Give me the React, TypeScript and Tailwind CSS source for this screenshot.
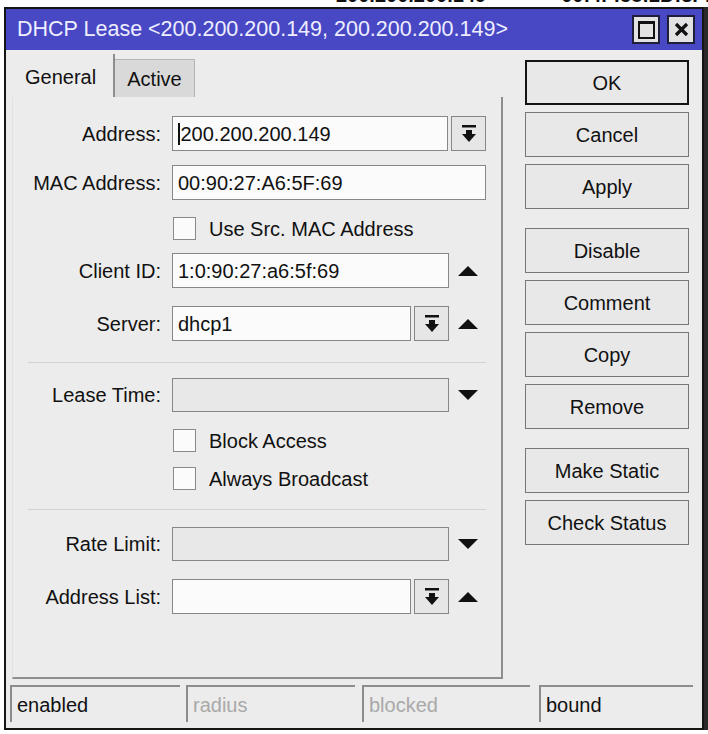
import React from 'react'

// MikroTik-style "DHCP Lease" dialog, drawn at the scale of the screenshot.

function DropIcon() {
  return (
    <svg width="16" height="19" viewBox="0 0 16 19" className="fill-[#111]">
      <rect x="1" y="1" width="14" height="2.5" />
      <path d="M5 6h6v4h4L8 18 1 10h4z" />
    </svg>
  )
}

function Tri({ dir }: { dir: 'up' | 'down' }) {
  return (
    <svg width="20" height="10" viewBox="0 0 20 10" className="fill-[#111]">
      {dir === 'up' ? <path d="M10 0 20 10H0z" /> : <path d="M0 0h20L10 10z" />}
    </svg>
  )
}

function Input({
  w,
  value,
  disabled,
  caret,
}: {
  w: string
  value?: string
  disabled?: boolean
  caret?: boolean
}) {
  return (
    <div
      className={`${w} flex h-full items-center border-[1.5px] border-[#878787] pl-[5px] text-[20px] text-[#111] ${
        disabled ? 'bg-[#e8e8e8]' : 'bg-[#fbfbfb]'
      }`}
    >
      {caret && <span className="mr-[1px] h-[22px] w-[1.5px] bg-[#111]" />}
      {value}
    </div>
  )
}

function DropBtn() {
  return (
    <div className="ml-[3px] flex h-full w-[35px] items-center justify-center border-[1.5px] border-[#878787] bg-[#e6e6e6]">
      <DropIcon />
    </div>
  )
}

function Row({
  label,
  mt,
  h = 'h-[35px]',
  children,
}: {
  label: string
  mt: string
  h?: string
  children: React.ReactNode
}) {
  return (
    <div className={`flex items-center ${h} ${mt}`}>
      <div className="w-[148px] text-right text-[20px] text-[#111]">{label}</div>
      <div className="ml-[11px] flex h-full items-center">{children}</div>
    </div>
  )
}

function TriSlot({ dir }: { dir: 'up' | 'down' }) {
  return (
    <div className="flex w-[38px] items-center justify-center">
      <Tri dir={dir} />
    </div>
  )
}

function Check({ label, mt }: { label: string; mt: string }) {
  return (
    <div className={`ml-[160px] flex h-[23px] items-center ${mt}`}>
      <span className="size-[23px] border-[1.5px] border-[#8a8a8a] bg-[#fbfbfb]" />
      <span className="ml-[13px] text-[20px] text-[#111]">{label}</span>
    </div>
  )
}

function Sep({ mt }: { mt: string }) {
  return <div className={`ml-[15px] h-px w-[458px] bg-[#d2d2d2] ${mt}`} />
}

function Btn({ label, mt, primary }: { label: string; mt: string; primary?: boolean }) {
  return (
    <div
      className={`flex h-[45px] w-[164px] items-center justify-center bg-[#e8e8e8] text-[20px] text-[#111] ${mt} ${
        primary ? 'border-2 border-[#141414]' : 'border-[1.5px] border-[#767676]'
      }`}
    >
      {label}
    </div>
  )
}

function Cell({ w, text, dim }: { w: string; text: string; dim?: boolean }) {
  return (
    <div
      className={`${w} flex h-full items-center border-l-2 border-t-2 border-[#8c8c8c] pl-[5px] text-[20px] ${
        dim ? 'text-[#a9a9a9]' : 'text-[#111]'
      }`}
    >
      {text}
    </div>
  )
}

export default function App() {
  return (
    <div className="h-[734px] w-[708px] overflow-hidden bg-white font-['Liberation_Sans',Arial,sans-serif]">
      {/* edge of the list window behind */}
      <div className="flex h-[7px] overflow-hidden text-[20px] font-bold leading-[22px] text-[#111]">
        <span className="ml-[336px] mt-[-16px]">200.200.200.149</span>
        <span className="ml-[75px] mt-[-16px]">00:4F:58:2D:3F:24</span>
      </div>

      <div className="flex">
        <div className="w-[4px]" />
        <div className="flex h-[723px] w-[700px] flex-col border-2 border-[#151515]">
          {/* title bar */}
          <div className="flex h-[41px] items-center bg-[#4848c4] pl-[11px] pr-[7px]">
            <span className="text-[21.5px] text-[#eeeeff]">
              DHCP Lease &lt;200.200.200.149, 200.200.200.149&gt;
            </span>
            <div className="ml-auto flex gap-[7px]">
              <div className="flex h-[29px] w-[28px] items-center justify-center border-2 border-[#1e1e3a] bg-[#e2e2e2]">
                <span className="h-[18px] w-[17px] border-2 border-t-[3px] border-[#111]" />
              </div>
              <div className="flex h-[29px] w-[28px] items-center justify-center border-2 border-[#1e1e3a] bg-[#e2e2e2]">
                <svg width="15" height="15" viewBox="0 0 15 15" className="stroke-[#111]">
                  <path d="M2 2 13 13M13 2 2 13" strokeWidth="3.2" />
                </svg>
              </div>
            </div>
          </div>

          {/* body */}
          <div className="flex flex-1 flex-col bg-[#ececec]">
            <div className="flex h-[629px]">
              <div className="flex flex-col pl-[6px] pt-[4px]">
                {/* tabs */}
                <div className="flex h-[43px] items-end">
                  <div className="flex h-[43px] w-[103px] items-center border-r-2 border-[#8e8e8e] pl-[13px] pt-[2px] text-[20px] text-[#111]">
                    General
                  </div>
                  <div className="flex h-[38px] w-[80px] items-center justify-center border-r-[1.5px] border-t-[1.5px] border-[#b4b4b4] bg-[#d9d9d9] text-[20px] text-[#111]">
                    Active
                  </div>
                  <div className="h-px flex-1" />
                </div>

                {/* tab panel */}
                <div className="flex h-[582px] w-[491px] flex-col border-b-2 border-r-2 border-[#8e8e8e] border-l border-l-[#e2e2e2]">
                  <Row label="Address:" mt="mt-[19px]">
                    <Input w="w-[276px]" value="200.200.200.149" caret />
                    <DropBtn />
                  </Row>
                  <Row label="MAC Address:" mt="mt-[14px]">
                    <Input w="w-[314px]" value="00:90:27:A6:5F:69" />
                  </Row>
                  <Check label="Use Src. MAC Address" mt="mt-[17px]" />
                  <Row label="Client ID:" mt="mt-[13px]">
                    <Input w="w-[277px]" value="1:0:90:27:a6:5f:69" />
                    <TriSlot dir="up" />
                  </Row>
                  <Row label="Server:" mt="mt-[18px]">
                    <Input w="w-[239px]" value="dhcp1" />
                    <DropBtn />
                    <TriSlot dir="up" />
                  </Row>
                  <Sep mt="mt-[21px]" />
                  <Row label="Lease Time:" mt="mt-[15px]" h="h-[34px]">
                    <Input w="w-[277px]" disabled />
                    <TriSlot dir="down" />
                  </Row>
                  <Check label="Block Access" mt="mt-[17px]" />
                  <Check label="Always Broadcast" mt="mt-[15px]" />
                  <Sep mt="mt-[19px]" />
                  <Row label="Rate Limit:" mt="mt-[17px]" h="h-[34px]">
                    <Input w="w-[277px]" disabled />
                    <TriSlot dir="down" />
                  </Row>
                  <Row label="Address List:" mt="mt-[18px]">
                    <Input w="w-[239px]" />
                    <DropBtn />
                    <TriSlot dir="up" />
                  </Row>
                </div>
              </div>

              {/* buttons */}
              <div className="ml-[22px] flex flex-col">
                <Btn label="OK" mt="mt-[10px]" primary />
                <Btn label="Cancel" mt="mt-[7px]" />
                <Btn label="Apply" mt="mt-[7px]" />
                <Btn label="Disable" mt="mt-[19px]" />
                <Btn label="Comment" mt="mt-[7px]" />
                <Btn label="Copy" mt="mt-[7px]" />
                <Btn label="Remove" mt="mt-[7px]" />
                <Btn label="Make Static" mt="mt-[19px]" />
                <Btn label="Check Status" mt="mt-[7px]" />
              </div>
            </div>

            {/* status bar */}
            <div className="ml-[4px] mt-[6px] flex h-[37px]">
              <Cell w="w-[170px]" text="enabled" />
              <div className="w-[6px]" />
              <Cell w="w-[169px]" text="radius" dim />
              <div className="w-[7px]" />
              <Cell w="w-[168px]" text="blocked" dim />
              <div className="w-[9px]" />
              <Cell w="w-[154px]" text="bound" />
            </div>
          </div>
        </div>
        <div className="h-[723px] w-[4px] bg-[#2a2a2a]" />
      </div>
    </div>
  )
}
